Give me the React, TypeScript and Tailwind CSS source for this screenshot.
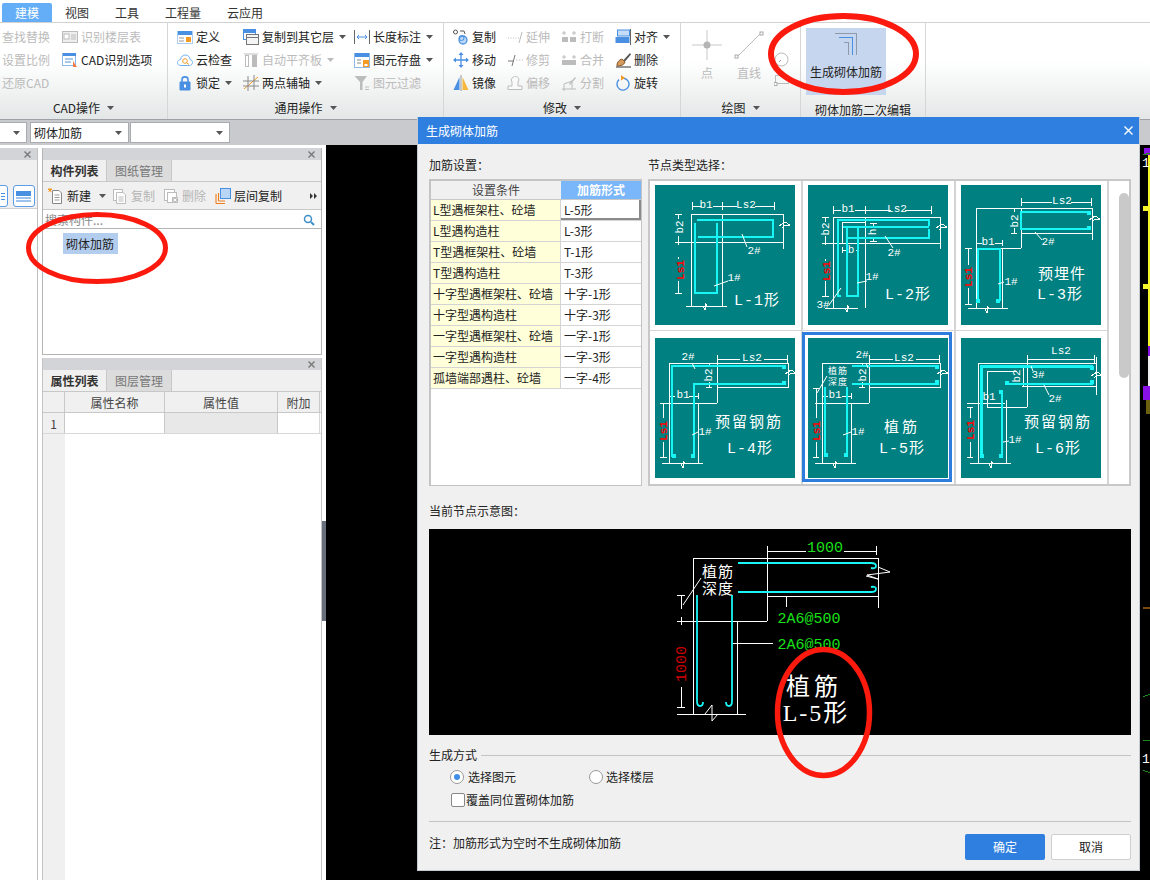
import React from "react";

const B = "#4a90e2";
const O = "#f39a27";
const G = "#bcbcbc";

type SP = { children: React.ReactNode };
const I = ({ children }: SP) => (
  <svg viewBox="0 0 16 16" className="w-4 h-4 shrink-0" fill="none">{children}</svg>
);

const Caret = ({ c = "#555" }: { c?: string }) => (
  <svg viewBox="0 0 7 4" className="w-[7px] h-[4px] shrink-0"><path d="M0 0H7L3.5 4Z" fill={c} /></svg>
);
const Close = ({ c = "#777" }: { c?: string }) => (
  <svg viewBox="0 0 7 7" className="w-[7px] h-[7px]"><path d="M0.5 0.5L6.5 6.5M6.5 0.5L0.5 6.5" stroke={c} strokeWidth="1.4" /></svg>
);

/* ribbon icons */
const icons: Record<string, React.ReactNode> = {
  table: <I><rect x=".5" y="2.5" width="15" height="11" fill="#eee" stroke={G} /><rect x="2" y="5" width="5" height="5" fill="#fff" stroke={G} /><path d="M9 6H14M9 8H14M9 10H14" stroke={G} /></I>,
  cad: <I><rect x=".5" y="1.5" width="13" height="12" fill="#fff" stroke="#8db9ea" /><rect x="1" y="1" width="13" height="3" fill={B} /><path d="M3 7H11M3 10H9" stroke="#8db9ea" strokeWidth="1.6" /><path d="M11 9L15 15H11Z" fill="#ef7d4a" /></I>,
  define: <I><rect x=".5" y="2.5" width="15" height="12" fill="#fff" stroke="#a9cdf2" /><rect x="1" y="2" width="14" height="4" fill={B} /><path d="M2 9H7M2 12H7" stroke="#999" /><rect x="9" y="8" width="5" height="5" fill={O} /></I>,
  cloud: <I><path d="M4 13.5C1.5 13.5.5 12 .5 10.5S2 7.5 3.5 7.5C4 4.5 6 3 8.5 3S13 5 13 7.5C14.5 7.8 15.5 9 15.5 10.5S14 13.5 12.5 13.5Z" fill="#fff" stroke="#6fb0ef" /><circle cx="8" cy="9" r="2.3" stroke={O} /><path d="M10 11L12 12.5" stroke={O} /></I>,
  lock: <I><path d="M5 7V4.5C5 1 11 1 11 4.5V7" stroke={B} strokeWidth="1.6" /><rect x="2.5" y="6.5" width="11" height="9" rx="1" fill={B} /><rect x="7" y="9.5" width="2" height="3" fill="#fff" /></I>,
  copyLayer: <I><rect x=".5" y=".5" width="12" height="10" fill="#fff" stroke={B} /><rect x="1" y="1" width="11" height="3" fill={B} /><rect x="3.5" y="5.5" width="12" height="10" fill="#f5f5f5" stroke="#777" /><path d="M4 8.5H15" stroke="#777" /></I>,
  autoAlign: <I><path d="M1 2H15" stroke={G} /><rect x="2.5" y="3.5" width="3" height="11" fill="#fff" stroke={G} /><rect x="9" y="3" width="5" height="12" fill={G} /></I>,
  twoPoint: <I><path d="M1 14L15 2" stroke={O} /><path d="M5 1V16M11 0V15M0 6H16M0 11H16" stroke="#8a8a8a" /></I>,
  dim: <I><path d="M.5 1V15M15.5 1V15" stroke="#666" /><path d="M3 8H13M5 6L3 8L5 10M11 6L13 8L11 10" stroke={B} /></I>,
  save: <I><rect x=".5" y="1.5" width="15" height="14" fill="#fff" stroke="#8db9ea" /><rect x="1" y="1" width="14" height="4" fill={B} /><path d="M3 8H7M3 11H7" stroke="#888" /><rect x="9" y="8" width="6" height="7" fill={O} /><rect x="10.5" y="12" width="3" height="2" fill="#fff" /></I>,
  filter: <I><path d="M.5 1H13L8.5 7V15H6V7Z" fill={G} /><path d="M11 12H15M11 14.5H15" stroke={G} /></I>,
  copy: <I><circle cx="2.5" cy="3" r="2" stroke="#555" /><path d="M7 2H11L12 5" stroke="#555" /><circle cx="10" cy="11" r="4" fill="#b8d6f5" stroke={B} strokeWidth="1.3" /><circle cx="8.5" cy="9" r="2.5" stroke={B} /></I>,
  move: <I><path d="M8 1V15M1 8H15" stroke={B} strokeWidth="1.3" /><path d="M8 0L10.5 3H5.5ZM8 16L5.5 13H10.5ZM0 8L3 5.5V10.5ZM16 8L13 10.5V5.5Z" fill={B} /></I>,
  mirror: <I><path d="M6.5 2L.5 15H6.5Z" fill={B} /><path d="M9.5 2L15.5 15H9.5Z" fill="#f6b73c" /><path d="M8 0V16" stroke="#999" /></I>,
  extend: <I><path d="M1 9H2M3.5 9H4.5M6 9H7M8.5 9H9.5M11 9H12" stroke={G} /><path d="M12 14L15 3" stroke={G} /></I>,
  trim: <I><path d="M1 9H7" stroke="#777" /><path d="M5 14L8 3" stroke="#777" /><path d="M9 8H10.5M12 8H13.5M15 8H16" stroke={G} /></I>,
  offset: <I><path d="M1 14.5V11H5V7C3 4 6 1.5 8.5 1.5S13 4 11 7V11H15V14.5Z" fill="#fafafa" stroke={G} /></I>,
  breakI: <I><rect x="1" y="8" width="6" height="5" fill={G} /><rect x="9" y="8" width="6" height="5" fill={G} /><path d="M3 2V6M1 4H5M13 2V6M11 4H15" stroke={G} /></I>,
  merge: <I><rect x="1" y="8" width="14" height="5" fill={G} /><path d="M3 3V7M1 5H5M13 3V7M11 5H15" stroke={G} /></I>,
  split: <I><path d="M1 14H15M3 16V9L11 6V14" stroke={G} /><path d="M8 9L14 2L15 3L9 10Z" fill={G} /></I>,
  align: <I><rect x="2.5" y="1" width="12" height="6" fill="#c6ddf7" stroke={B} /><rect x=".5" y="8" width="14" height="6" fill={B} /><path d="M15.5 0V16" stroke="#666" /></I>,
  del: <I><path d="M1 15H16" stroke="#333" /><path d="M2 13C2 10 4 8 7 7L10 10C9 13 6 14 2 14Z" fill="#d49a5e" stroke="#8a5a2a" /><path d="M8.5 8L15 1L16 2.5L10 9.5Z" fill="#555" /></I>,
  rotate: <I><path d="M9 3.2A6 6 0 1 1 4 4.6" stroke={B} strokeWidth="1.4" /><path d="M6 0L10 3L6 5.5Z" fill={O} /></I>,
  newDoc: <I><path d="M4.5 2.5H11L13.5 5V15.5H4.5Z" fill="#fff" stroke="#888" /><path d="M6.5 7H11.5M6.5 9.5H11.5M6.5 12H11.5" stroke="#999" /><path d="M0 1.5H4M2 0V4M.5 .5L3.500 3.500M3.5 .5L.5 3.500" stroke={O} /></I>,
  docG: <I><rect x="1.5" y="1.5" width="9" height="11" fill="#fff" stroke={G} /><path d="M4.5 4.5H11L13.5 6.5V15.5H4.5Z" fill="#fff" stroke={G} /><path d="M6.5 9H11.5M6.5 11H11.5M6.5 13H11.5" stroke={G} /></I>,
  docX: <I><rect x="1.5" y="1.5" width="10" height="11" fill="#fff" stroke={G} /><rect x="4.5" y="4.5" width="9" height="10" fill="#fff" stroke={G} /><rect x="9" y="9" width="6" height="6" fill={G} /><path d="M10.5 10.5L13.5 13.5M13.5 10.5L10.5 13.5" stroke="#fff" /></I>,
  layerCopy: <I><path d="M1 15.5V6M1 15.5H10M3.5 13V5M3.500 13H10" stroke="#f07f1a" strokeWidth="1.1" /><rect x="5.5" y=".5" width="10" height="10" fill="#b9d6f7" stroke={B} /></I>,
};

type ItemP = { icon?: string; label: string; off?: boolean; caret?: boolean };
const Item = ({ icon, label, off, caret }: ItemP) => (
  <div className={`h-[23px] flex items-center whitespace-nowrap ${off ? "text-[#bbbbbb]" : "text-[#222]"}`}>
    {icon ? <span className="mr-[3px]">{icons[icon]}</span> : null}
    <span>{label}</span>
    {caret ? <span className="ml-[5px]"><Caret c={off ? "#bbb" : "#555"} /></span> : null}
  </div>
);

const GroupLabel = ({ label }: { label: string }) => (
  <div className="h-[24px] pt-[1px] flex items-center justify-center gap-[7px] text-[#222]">
    <span>{label}</span>
    <Caret />
  </div>
);

const Ribbon = () => (
  <div className="h-[97px] flex bg-linear-to-b from-white from-40% to-[#e4e7e7] border-b border-[#9da0a4]">
    <div className="w-[168px] shrink-0 border-r border-[#d6d6d6] flex flex-col">
      <div className="flex-1 flex pt-[2px] pl-[2px]">
        <div className="w-[60px]">
          <Item label="查找替换" off /><Item label="设置比例" off /><Item label="还原CAD" off />
        </div>
        <div>
          <Item icon="table" label="识别楼层表" off /><Item icon="cad" label="CAD识别选项" />
        </div>
      </div>
      <GroupLabel label="CAD操作" />
    </div>
    <div className="w-[276px] shrink-0 border-r border-[#d6d6d6] flex flex-col">
      <div className="flex-1 flex pt-[2px] pl-[9px]">
        <div className="w-[66px]">
          <Item icon="define" label="定义" /><Item icon="cloud" label="云检查" /><Item icon="lock" label="锁定" caret />
        </div>
        <div className="w-[111px]">
          <Item icon="copyLayer" label="复制到其它层" caret /><Item icon="autoAlign" label="自动平齐板" off caret /><Item icon="twoPoint" label="两点辅轴" caret />
        </div>
        <div>
          <Item icon="dim" label="长度标注" caret /><Item icon="save" label="图元存盘" caret /><Item icon="filter" label="图元过滤" off />
        </div>
      </div>
      <GroupLabel label="通用操作" />
    </div>
    <div className="w-[237px] shrink-0 border-r border-[#d6d6d6] flex flex-col">
      <div className="flex-1 flex pt-[2px] pl-[9px]">
        <div className="w-[54px]"><Item icon="copy" label="复制" /><Item icon="move" label="移动" /><Item icon="mirror" label="镜像" /></div>
        <div className="w-[54px]"><Item icon="extend" label="延伸" off /><Item icon="trim" label="修剪" off /><Item icon="offset" label="偏移" off /></div>
        <div className="w-[54px]"><Item icon="breakI" label="打断" off /><Item icon="merge" label="合并" off /><Item icon="split" label="分割" off /></div>
        <div><Item icon="align" label="对齐" caret /><Item icon="del" label="删除" /><Item icon="rotate" label="旋转" /></div>
      </div>
      <GroupLabel label="修改" />
    </div>
    <div className="w-[120px] shrink-0 border-r border-[#d6d6d6] flex flex-col">
      <div className="flex-1 flex pt-[7px] pl-[11px] text-[#bbbbbb]">
        <div className="w-[30px] flex flex-col items-center">
          <svg viewBox="0 0 30 30" className="w-[30px] h-[30px]"><path d="M0 15H30M15 0V30" stroke="#c8c8c8" /><circle cx="15" cy="15" r="3.5" fill="#b5b5b5" /></svg>
          <span className="mt-[5px] leading-[16px]">点</span>
        </div>
        <div className="w-[30px] ml-[12px] flex flex-col items-center">
          <svg viewBox="0 0 30 30" className="w-[30px] h-[30px]"><path d="M3 27L27 3" stroke="#bbb" /><rect x="1" y="25" width="3" height="3" fill="#fff" stroke="#aaa" /><rect x="26" y="2" width="3" height="3" fill="#fff" stroke="#aaa" /></svg>
          <span className="mt-[5px] leading-[16px]">直线</span>
        </div>
        <div className="w-[15px] ml-[10px] flex flex-col items-center pt-[22px] gap-[8px]">
          <svg viewBox="0 0 15 15" className="w-[15px] h-[15px]"><circle cx="7.5" cy="7.5" r="6.5" stroke="#bbb" fill="none" /><path d="M5 10L7 8" stroke="#999" /></svg>
          <svg viewBox="0 0 15 11" className="w-[15px] h-[11px]"><rect x="1.5" y=".5" width="13" height="8" stroke="#bbb" fill="none" /><rect x="0" y="7.5" width="3" height="3" fill="#fff" stroke="#aaa" /></svg>
        </div>
      </div>
      <GroupLabel label="绘图" />
    </div>
    <div className="w-[125px] shrink-0 border-r border-[#d6d6d6] flex flex-col">
      <div className="flex-1 pt-[5px] pl-[5px]">
        <div className="w-[80px] h-[67px] bg-[#c6d6ee] flex flex-col items-center text-[#222]">
          <svg viewBox="0 0 24 24" className="w-[24px] h-[24px] mt-[4px]" fill="none" shapeRendering="crispEdges">
            <path d="M1 1.5H22.5V23" stroke="#8e9aa8" /><path d="M5 5.5H18.5V23" stroke={B} /><path d="M10 10.5H14.5V23" stroke="#8e9aa8" />
          </svg>
          <span className="mt-[8px] leading-[16px]">生成砌体加筋</span>
        </div>
      </div>
      <div className="h-[24px] pt-[6px] text-center leading-[18px] text-[#222]">砌体加筋二次编辑</div>
    </div>
  </div>
);

const Combo = ({ w, label = "" }: { w: string; label?: string }) => (
  <div className={`${w} h-[21px] bg-white border border-[#a9abae] flex items-center justify-between pl-[3px] pr-[6px] text-[#222]`}>
    <span>{label}</span><Caret />
  </div>
);

const PanelHead = () => (
  <div className="h-[12px] bg-[#d3d4d8] flex items-center justify-end pr-[6px]"><Close /></div>
);
const Tabs = ({ a, b }: { a: string; b: string }) => (
  <div className="h-[22px] flex bg-[#f0f0f0] border-b border-[#c8c8c8]">
    <div className="w-[64px] flex items-center justify-center font-bold text-[#333] border-r border-[#c8c8c8]">{a}</div>
    <div className="w-[65px] bg-[#dcdcdc] flex items-center justify-center text-[#777] border-r border-[#c8c8c8]">{b}</div>
  </div>
);

const PanelTool = ({ icon, label, off, caret, w }: { icon: string; label: string; off?: boolean; caret?: boolean; w: string }) => (
  <div className={`${w} flex items-center shrink-0 ${off ? "text-[#b5b5b5]" : "text-[#222]"}`}>
    <span className="mr-[3px]">{icons[icon]}</span><span>{label}</span>
    {caret ? <span className="ml-[8px]"><Caret /></span> : null}
  </div>
);

const LeftPanels = () => (
  <div className="w-[326px] shrink-0 bg-white flex h-full pt-[3px] relative">
    <div className="w-[38px] shrink-0 border-r border-[#c0c0c0] h-full">
      <div className="h-[12px] bg-[#d3d4d8] flex items-center justify-end pr-[6px]"><Close /></div>
      <div className="h-[49px] bg-[#f0f0f0] border-b border-[#d0d0d0] pt-[25px] flex justify-end pr-[2px] gap-[5px] overflow-hidden">
        <div className="w-[16px] h-[22px] -ml-2 rounded-[3px] border border-[#5a9de8] bg-white flex flex-col gap-[2px] items-end justify-center pr-[2px]">
          <span className="w-[4px] h-[1px] bg-[#4a90e2]" /><span className="w-[4px] h-[1px] bg-[#4a90e2]" /><span className="w-[4px] h-[1px] bg-[#4a90e2]" />
        </div>
        <div className="w-[23px] h-[22px] rounded-[3px] border border-[#5a9de8] bg-white flex flex-col items-center justify-center gap-[1px]">
          <span className="w-[15px] h-[5px] bg-[#4a90e2]" />
          <span className="w-[15px] h-[2px] bg-[#9cc3ee]" />
          <span className="w-[15px] h-[2px] bg-[#9cc3ee]" />
        </div>
      </div>
    </div>
    <div className="w-[280px] ml-[4px] shrink-0 flex flex-col h-full">
      <div className="h-[207px] border-r border-l border-b border-[#b4b4b4] flex flex-col">
        <PanelHead />
        <Tabs a="构件列表" b="图纸管理" />
        <div className="h-[28px] pt-[1px] bg-[#f0f0f0] border-b border-[#c8c8c8] flex items-center pl-[5px] relative">
          <PanelTool icon="newDoc" label="新建" caret w="w-[64px]" />
          <PanelTool icon="docG" label="复制" off w="w-[51px]" />
          <PanelTool icon="docX" label="删除" off w="w-[52px]" />
          <PanelTool icon="layerCopy" label="层间复制" w="w-[68px]" />
          <svg viewBox="0 0 7 6" className="absolute right-[4px] top-[11px] w-[7px] h-[6px]"><path d="M0 0L3 3L0 6ZM4 0L7 3L4 6Z" fill="#333" /></svg>
        </div>
        <div className="h-[19px] pt-[1px] bg-white border-b border-[#b4b4b4] flex items-center justify-between pl-[2px] pr-[6px] text-[#888]">
          <span className="pt-[1px]">搜索构件...</span>
          <svg viewBox="0 0 12 12" className="w-[12px] h-[12px]" fill="none"><circle cx="5" cy="5" r="3.5" stroke="#3d8fc8" strokeWidth="1.5" /><path d="M8 8L11 11" stroke="#3d8fc8" strokeWidth="2" /></svg>
        </div>
        <div className="flex-1 bg-white pt-[4px] pl-[20px]">
          <div className="w-[55px] h-[21px] bg-[#b3cdee] flex items-center pl-[3px] text-[#222]">砌体加筋</div>
        </div>
      </div>
      <div className="flex-1 mt-[3px] border-r border-l border-[#c4c4c4] flex flex-col">
        <PanelHead />
        <Tabs a="属性列表" b="图层管理" />
        <div className="h-[21px] flex bg-[#f0f0f0] border-b border-[#c8c8c8] text-[#444] text-center leading-[21px]">
          <div className="w-[22px] border-r border-[#c8c8c8]" />
          <div className="w-[100px] border-r border-[#c8c8c8]">属性名称</div>
          <div className="w-[113px] border-r border-[#c8c8c8]">属性值</div>
          <div className="w-[42px] border-r border-[#c8c8c8]">附加</div>
        </div>
        <div className="h-[21px] flex border-b border-[#d8d8d8] text-[#444] leading-[21px]">
          <div className="w-[22px] bg-[#f0f0f0] border-r border-[#c8c8c8] text-center">1</div>
          <div className="w-[100px] bg-white border-r border-[#c8c8c8]" />
          <div className="w-[113px] bg-[#e8e8e8] border-r border-[#c8c8c8]" />
          <div className="w-[42px] bg-white border-r border-[#d8d8d8]" />
        </div>
        <div className="flex-1 flex"><div className="w-[22px] bg-[#f0f0f0]" /><div className="flex-1 bg-white" /></div>
      </div>
    </div>
    <div className="absolute right-0 top-[376px] w-[4px] h-[100px] bg-[#68717b]" />
  </div>
);

/* diagrams */
const W = ({ d }: { d: string }) => <path d={d} stroke="#fff" strokeWidth="1" fill="none" />;
const C = ({ d, w = 2 }: { d: string; w?: number }) => <path d={d} stroke="#19f5f5" strokeWidth={w} fill="none" />;
const Sq = ({ x, y }: { x: number; y: number }) => <rect x={x - 1.8} y={y - 1.8} width="3.6" height="3.6" fill="#19f5f5" />;
const T = ({ x, y, s, size = 11, cjk, sp = 0, rot, fill = "#fff", bold }: { x: number; y: number; s: string; size?: number; cjk?: boolean; sp?: number; rot?: boolean; fill?: string; bold?: boolean }) => (
  <text
    x={x} y={y} fontSize={size} fill={fill} textAnchor="middle" dominantBaseline="central"
    letterSpacing={sp}
    fontFamily={cjk ? "'Noto Sans CJK SC',sans-serif" : "'Liberation Mono','Noto Sans CJK SC',monospace"}
    fontWeight={bold ? 700 : 400}
    transform={rot ? `rotate(-90 ${x} ${y})` : undefined}
  >{s}</text>
);
const BrkV = ({ x, y }: { x: number; y: number }) => <W d={`M${x - 2} ${y}L${x} ${y + 4}L${x} ${y - 3}L${x + 2} ${y}`} />;
const BrkH = ({ x, y }: { x: number; y: number }) => <W d={`M${x - 5} ${y + 1}L${x + 1} ${y - 3}L${x + 6} ${y}L${x} ${y + 1}L${x - 2} ${y + 3}`} />;

const Node = ({ children }: SP) => (
  <svg viewBox="0 0 140 140" className="w-[140px] h-[140px] block bg-[#008080]" shapeRendering="crispEdges">{children}</svg>
);
const Lead = ({ d }: { d: string }) => <path d={d} stroke="#fff" strokeWidth="1" fill="none" shapeRendering="auto" />;
const Red = ({ x, y }: { x: number; y: number }) => <T x={x} y={y} s="Ls1" rot bold fill="#ff0000" />;

const L1 = () => (
  <Node>
    <W d="M37 21H46M58 21H82M100 21H119M37 17V25M67 17V25M119 17V25" />
    <T x={51} y={20} s="b1" /><T x={91} y={20} s="Ls2" />
    <W d="M36 29H128V64M36 29V121M67 29V121M23 57H128M31 121H72" /><BrkV x={50} y={121} /><BrkH x={129} y={40} />
    <W d="M23 29V34M23 51V60M23 72V74M23 96V108M20 29H27M20 57H27M20 108H27" />
    <T x={25} y={42} s="b2" rot /><Red x={26} y={85} />
    <C d="M42 35H118V52H43" /><C d="M40 38V108H62V38" />
    <Lead d="M87 49L92 62" /><T x={99} y={66} s="2#" /><Lead d="M59 101L73 96" /><T x={79} y={93} s="1#" />
    <T x={102} y={116} s="L-1形" size={15} sp={1} />
  </Node>
);
const L2 = () => (
  <Node>
    <W d="M25 25H33M47 25H83M97 25H123M25 21V29M57 21V29M123 21V29" />
    <T x={40} y={24} s="b1" /><T x={89} y={24} s="Ls2" />
    <W d="M25 32H132V64M25 32V123M57 32V123M14 58H132M17 123H50M34 37V58M34 37H57M34 65H39M48 65H50M34 62V68M50 62V68" /><BrkV x={39} y={123} /><BrkH x={133} y={42} />
    <W d="M17 32V37M17 51V60M17 74V76M17 96V111M14 32H21M14 58H21M14 111H21M65 38V42M65 52V56M62 38H69M62 56H69" />
    <T x={18} y={44} s="b2" rot /><Red x={19} y={86} /><T x={65} y={47} s="h" rot />
    <T x={43} y={65} s="b" />
    <C d="M33 111H30V35H121V41" /><C d="M35 42H121M121 44V53H39" /><C d="M39 43V111H50V43" />
    <Lead d="M77 51L85 63" /><T x={86} y={68} s="2#" /><Lead d="M49 98L59 96" /><T x={64} y={92} s="1#" /><Lead d="M33 103L21 120" /><T x={15} y={120} s="3#" />
    <T x={100} y={110} s="L-2形" size={15} sp={1} />
  </Node>
);
const L3 = () => (
  <Node>
    <W d="M60 17H91M110 17H130M60 13V21M130 13V21" /><T x={101} y={16} s="Ls2" />
    <W d="M15 23H131V55M15 23V123M60 23V63M15 63H60M60 48H131M41 63V123M7 123H47" /><BrkV x={26} y={124} /><BrkH x={133} y={34} />
    <W d="M15 58H21M34 58H41M41 55V61M50 23H56M50 48H56M53 23V27M53 43V48M4 63H11M4 119H11M7 63V80M7 103V119" />
    <T x={27} y={57} s="b1" /><T x={54} y={36} s="b2" rot /><Red x={8} y={92} />
    <C d="M130 27H60V44H130" /><C d="M17 116V64H39V116" /><Sq x={17} y={116} /><Sq x={37} y={116} /><Sq x={128} y={28} /><Sq x={128} y={43} />
    <Lead d="M74 47L81 55" /><T x={87} y={57} s="2#" /><Lead d="M37 99L43 97" /><T x={50} y={97} s="1#" />
    <T x={101} y={87} s="预埋件" size={15} cjk sp={1} /><T x={99} y={110} s="L-3形" size={15} sp={1} />
  </Node>
);
const L4 = () => (
  <Node>
    <W d="M62 21H85M109 21H132M62 17V25M132 17V25" /><T x={97} y={20} s="Ls2" />
    <W d="M14 25H133V49H62M14 25V125M62 25V65M7 65H62M43 65V125M7 125H48" /><BrkV x={28} y={126} /><BrkH x={135} y={35} />
    <W d="M14 58H20M34 58H43M43 55V61M54 25V29M54 44V49M51 49H57M5 65H12M5 119H12M8 65V80M8 104V119" />
    <T x={28} y={57} s="b1" /><T x={54} y={37} s="b2" rot /><Red x={9} y={93} />
    <C d="M17 119V28H131" /><C d="M39 119V46H131" /><Sq x={19} y={118} /><Sq x={38} y={118} /><Sq x={129} y={29} /><Sq x={129} y={45} />
    <Lead d="M37 25L40 31" /><T x={33} y={19} s="2#" /><Lead d="M37 97L43 94" /><T x={50} y={94} s="1#" />
    <T x={94} y={82} s="预留钢筋" size={15} cjk sp={2} /><T x={95} y={111} s="L-4形" size={15} sp={1} />
  </Node>
);
const L5 = () => (
  <Node>
    <W d="M61 21H85M108 21H131M61 17V25M131 17V25" /><T x={96} y={20} s="Ls2" />
    <W d="M14 25H132V49H61M14 25V125M61 25V65M7 65H61M43 65V125M7 125H48" /><BrkV x={27} y={126} /><BrkH x={134} y={35} />
    <W d="M14 58H20M34 58H43M43 55V61M54 25V29M54 44V49M51 49H57M5 50H11M5 119H11M8 50V80M8 104V119" />
    <T x={27} y={57} s="b1" /><T x={55} y={37} s="b2" rot /><Red x={9} y={93} />
    <T x={30} y={32} s="植筋" size={9} cjk sp={1} /><T x={30} y={43} s="深度" size={9} cjk sp={1} />
    <Lead d="M19 38L9 55" />
    <C d="M44 28H131" /><C d="M44 46H131" /><C d="M17 49V118" /><C d="M39 49V118" />
    <Sq x={18} y={117} /><Sq x={38} y={117} /><Sq x={129} y={29} /><Sq x={129} y={44} />
    <Lead d="M58 25L60 30" /><T x={54} y={17} s="2#" /><Lead d="M35 97L43 94" /><T x={50} y={94} s="1#" />
    <T x={94} y={87} s="植筋" size={15} cjk sp={3} /><T x={94} y={111} s="L-5形" size={15} sp={1} />
  </Node>
);
const L6 = () => (
  <Node>
    <W d="M66 21H133M66 17V25M133 17V25" /><T x={100} y={13} s="Ls2" />
    <W d="M17 25H135M135 19V57M61 48H135M17 25V125M66 25V69M26 33H56M26 33V69M26 69H66M6 65H44M45 62V125M9 125H50M62 28V48" /><BrkV x={30} y={126} /><BrkH x={135} y={37} />
    <W d="M6 69H12M6 119H12M9 69V80M9 104V119" />
    <T x={28} y={59} s="b1" /><T x={56} y={38} s="b2" rot /><Red x={10} y={92} />
    <C d="M20 119V28H132" w={3} /><C d="M44 46H132" /><C d="M41 54V119" />
    <Sq x={21} y={118} /><Sq x={40} y={54} /><Sq x={40} y={118} /><Sq x={131} y={30} /><Sq x={131} y={44} /><Sq x={46} y={45} />
    <Lead d="M70 28L72 33" /><T x={77} y={37} s="3#" /><Lead d="M83 47L88 57" /><T x={94} y={61} s="2#" /><Lead d="M42 104L48 103" /><T x={54} y={102} s="1#" />
    <T x={97} y={82} s="预留钢筋" size={15} cjk sp={2} /><T x={97} y={111} s="L-6形" size={15} sp={1} />
  </Node>
);

const BigDiagram = () => (
  <svg viewBox="0 0 702 206" className="w-[702px] h-[206px] block bg-black">
    <g shapeRendering="crispEdges">
      <W d="M338 22H377M415 22H447M338 17V26M447 17V26" />
      <W d="M264 29H449V79M264 29V185M338 17V92M249 92H338M338 67H449M357 67V78M308 92V185M248 185H317M304 114H344" />
      <W d="M252 66V80M252 88V96M252 158V178M248 66H256M248 178H256M248 92H256" />
    </g>
    <W d="M272 49L254 76M276 185L283 176V192L289 185M437 47L449 50L438 46L461 43L449 38" />
    <T x={396} y={19} s="1000" size={15} fill="#19e019" />
    <T x={380} y={90} s="2A6@500" size={15} fill="#19e019" /><T x={380} y={116} s="2A6@500" size={15} fill="#19e019" />
    <T x={253} y={135} s="1000" size={15} fill="#cc0000" rot />
    <T x={289} y={41} s="植筋" size={15} cjk sp={1} /><T x={289} y={58} s="深度" size={15} cjk sp={1} />
    <path d="M309 34H442Q447 34 447 37T442 39M309 63H442Q447 63 447 60T442 58M268 66V172Q268 177 271 177T274 173M303 66V172Q303 177 300 177T297 173" stroke="#19f5f5" strokeWidth="1.8" fill="none" />
    <text x={385} y={155} fontSize="24" fill="#fff" textAnchor="middle" dominantBaseline="central" letterSpacing="4" fontFamily="'Noto Sans CJK SC',sans-serif">植筋</text>
    <text x={387} y={184} fontSize="24" fill="#fff" textAnchor="middle" dominantBaseline="central" letterSpacing="2" fontFamily="'Liberation Serif','Noto Sans CJK SC',serif">L-5形</text>
  </svg>
);

const rows: [string, string][] = [
  ["L型遇框架柱、砼墙", "L-5形"],
  ["L型遇构造柱", "L-3形"],
  ["T型遇框架柱、砼墙", "T-1形"],
  ["T型遇构造柱", "T-3形"],
  ["十字型遇框架柱、砼墙", "十字-1形"],
  ["十字型遇构造柱", "十字-3形"],
  ["一字型遇框架柱、砼墙", "一字-1形"],
  ["一字型遇构造柱", "一字-3形"],
  ["孤墙端部遇柱、砼墙", "一字-4形"],
];

const Dialog = () => (
  <div className="absolute left-[417px] top-[117px] w-[723px] h-[754px] bg-[#f0f0f0] border-r border-b border-l border-[#c5c9d2] flex flex-col text-[#222]">
    <div className="h-[27px] bg-[#2f7fe0] text-white flex items-center justify-between pl-[8px] pr-[6px] shrink-0">
      <span>生成砌体加筋</span>
      <svg viewBox="0 0 9 9" className="w-[9px] h-[9px]"><path d="M.5 .5L8.5 8.5M8.500 .5L.5 8.500" stroke="#fff" strokeWidth="1.400" /></svg>
    </div>
    <div className="flex-1 pl-[11px] pr-[8px] pt-[12px] flex flex-col">
      <div className="flex">
        <div className="w-[213px] shrink-0">
          <div className="h-[18px] leading-[18px]">加筋设置：</div>
          <div className="mt-[5px] h-[307px] bg-white border-2 border-[#c4c4c4] border-b-1 border-r-1">
            <div className="flex h-[19px] bg-[#f0f0f0] border-b border-[#c8c8c8] leading-[18px] text-center">
              <div className="w-[130px] text-[#444]">设置条件</div>
              <div className="w-[80px] bg-[#7ab6fa] text-white font-bold">加筋形式</div>
            </div>
            {rows.map((r, i) => (
              <div key={r[0]} className="flex h-[21px] border-b border-[#d4d4d4] leading-[20px] text-[#222]">
                <div className="w-[130px] bg-[#ffffd9] border-r border-[#d4d4d4] pl-[2px] whitespace-nowrap">{r[0]}</div>
                <div className={`w-[80px] bg-white pl-[3px] ${i === 0 ? "border-2 border-[#8a8a8a] border-t-0 border-l-0" : ""}`}>{r[1]}</div>
              </div>
            ))}
          </div>
        </div>
        <div className="ml-[6px] w-[483px] shrink-0">
          <div className="h-[18px] leading-[18px]">节点类型选择：</div>
          <div className="mt-[5px] h-[307px] bg-white border-2 border-[#c8c8c8] flex">
            <div className="w-[459px] shrink-0">
              <div className="flex h-[150px] border-b border-[#d4d4d4]">
                <div className="w-[153px] border-r-2 border-[#d4d4d4] pl-[5px] pt-[4px]"><L1 /></div>
                <div className="w-[153px] border-r-2 border-[#d4d4d4] pl-[5px] pt-[4px]"><L2 /></div>
                <div className="w-[153px] border-r-2 border-[#d4d4d4] pl-[5px] pt-[4px]"><L3 /></div>
              </div>
              <div className="flex h-[153px]">
                <div className="w-[153px] border-r-2 border-[#d4d4d4] pl-[5px] pt-[7px]"><L4 /></div>
                <div className="w-[153px] border-r-2 border-[#d4d4d4] pl-[5px] pt-[7px] relative">
                  <L5 />
                  <div className="absolute -left-px top-[1px] w-[150px] h-[150px] border-[3px] border-[#2e7cdd]" />
                </div>
                <div className="w-[153px] border-r-2 border-[#d4d4d4] pl-[5px] pt-[7px]"><L6 /></div>
              </div>
            </div>
            <div className="flex-1 pl-[10px] pt-[12px]"><div className="w-[10px] h-[185px] rounded-[5px] bg-[#c9c9c9]" /></div>
          </div>
        </div>
      </div>
      <div className="mt-[16px] h-[18px] leading-[18px]">当前节点示意图：</div>
      <div className="mt-[9px]"><BigDiagram /></div>
      <div className="mt-[11px] h-[18px] flex items-center gap-[4px]">
        <span>生成方式</span><span className="flex-1 h-px bg-[#c4c4c4]" />
      </div>
      <div className="mt-[3px] h-[20px] flex items-center pl-[21px]">
        <span className="w-[14px] h-[14px] rounded-full border border-[#999] bg-white flex items-center justify-center"><span className="w-[6px] h-[6px] rounded-full bg-[#3f8ee8]" /></span>
        <span className="ml-[4px] w-[121px]">选择图元</span>
        <span className="w-[14px] h-[14px] rounded-full border border-[#999] bg-white" />
        <span className="ml-[3px]">选择楼层</span>
      </div>
      <div className="mt-[3px] h-[20px] flex items-center pl-[22px]">
        <span className="w-[14px] h-[14px] rounded-[2px] border border-[#888] bg-white" />
        <span className="ml-[1px]">覆盖同位置砌体加筋</span>
      </div>
      <div className="mt-[11px] h-px bg-[#c4c4c4]" />
      <div className="mt-[12px] flex justify-between items-start">
        <span className="leading-[18px]">注：加筋形式为空时不生成砌体加筋</span>
        <div className="flex gap-[6px]">
          <div className="w-[80px] h-[26px] rounded-[2px] bg-[#2f7fe0] text-white flex items-center justify-center">确定</div>
          <div className="w-[80px] h-[26px] rounded-[2px] bg-white border border-[#cfcfcf] flex items-center justify-center">取消</div>
        </div>
      </div>
    </div>
  </div>
);

const Canvas = () => (
  <div className="flex-1 h-full bg-black relative">
    <svg viewBox="0 0 824 735" className="absolute inset-0 w-[824px] h-[735px]" shapeRendering="crispEdges">
      <rect x="822" y="3" width="2" height="198" fill="#f5f52a" />
      <rect x="818" y="3" width="6" height="7" fill="#8a10e8" />
      <rect x="817" y="61" width="7" height="5" fill="#f5f52a" />
      <rect x="817" y="139" width="7" height="5" fill="#f5f52a" />
      <rect x="822" y="201" width="2" height="10" fill="#8a10e8" />
      <rect x="822" y="211" width="2" height="30" fill="#eeeeee" />
      <rect x="817" y="241" width="7" height="14" fill="#8a10e8" />
      <rect x="820" y="255" width="4" height="14" fill="#6b6010" />
      <rect x="817" y="462" width="7" height="2" fill="#7a4a10" />
      <path d="M817 10L824 8M817 552L824 549M817 595H824M817 625L824 628" stroke="#1a8a1a" />
      <text x="820" y="22" fontSize="13" fill="#fff" textAnchor="middle" fontFamily="'Liberation Mono',monospace">1</text>
      <text x="820" y="618" fontSize="13" fill="#fff" textAnchor="middle" fontFamily="'Liberation Mono',monospace">1</text>
    </svg>
  </div>
);

export default function App() {
  return (
    <div className="relative w-[1150px] h-[880px] overflow-hidden bg-white flex flex-col text-[12px] leading-[16px] font-['Noto_Sans_CJK_SC','Liberation_Sans',sans-serif]">
      <div className="h-[23px] flex items-end border-b border-[#d2d2d2] text-[#333] bg-white shrink-0">
        <div className="ml-[2px] w-[50px] h-[19px] bg-[#63aef6] rounded-t-[2px] text-white flex items-center justify-center">建模</div>
        <div className="ml-[13px] h-[19px] flex items-center gap-[26px]">
          <span>视图</span><span>工具</span><span>工程量</span><span>云应用</span>
        </div>
      </div>
      <Ribbon />
      <div className="h-[25px] bg-[#c8cacd] flex items-center gap-[1px] shrink-0">
        <Combo w="w-[28px] -ml-px" /><span className="w-[1px]" /><Combo w="w-[99px]" label="砌体加筋" /><Combo w="w-[100px]" />
      </div>
      <div className="flex-1 min-h-0 flex">
        <LeftPanels />
        <Canvas />
      </div>
      <Dialog />
      <svg viewBox="0 0 1150 880" className="absolute inset-0 w-[1150px] h-[880px] pointer-events-none" fill="none">
        <ellipse cx="843.5" cy="54" rx="72.5" ry="38" stroke="#fb1a0d" strokeWidth="6" />
        <ellipse cx="97" cy="248" rx="68.5" ry="33.5" stroke="#fb1a0d" strokeWidth="5" />
        <ellipse cx="823.5" cy="712.5" rx="46" ry="63" stroke="#fb1a0d" strokeWidth="5.5" />
      </svg>
    </div>
  );
}
